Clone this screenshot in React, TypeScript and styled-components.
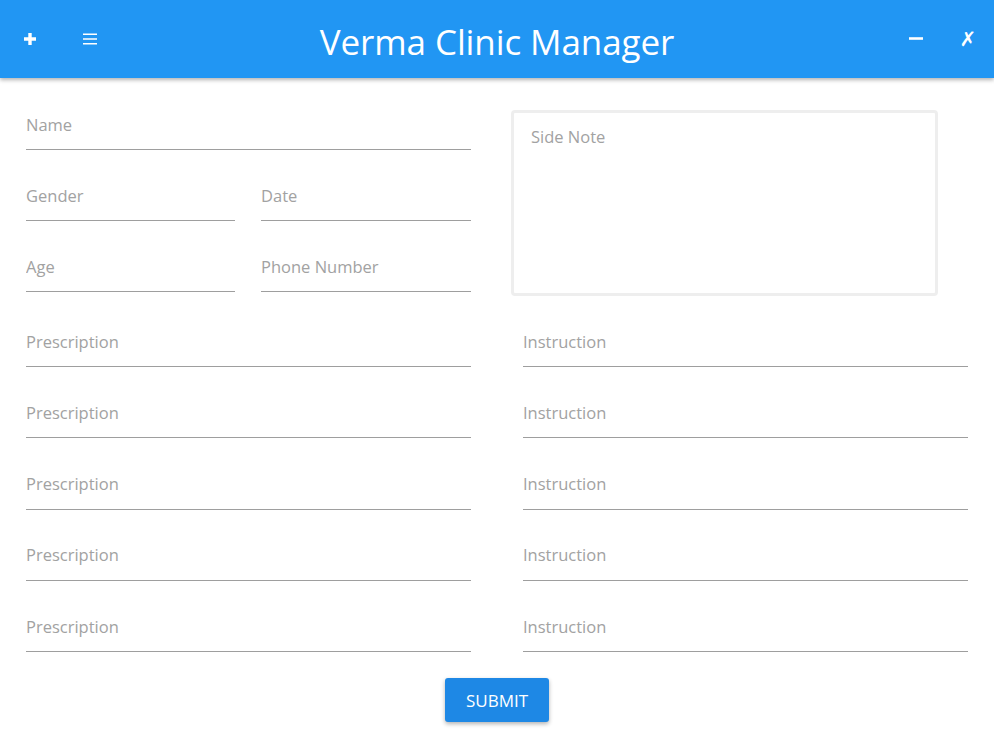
import React from 'react';
import styled, { createGlobalStyle } from 'styled-components';

const GlobalStyle = createGlobalStyle`
  * {
    box-sizing: border-box;
  }
  body {
    margin: 0;
    background: #ffffff;
    font-family: 'Open Sans', 'Noto Sans', sans-serif;
  }
`;

const Page = styled.div`
  width: 994px;
  height: 743px;
  display: flex;
  flex-direction: column;
  overflow: hidden;
`;

const Header = styled.header`
  height: 78px;
  flex-shrink: 0;
  display: flex;
  align-items: center;
  background: #2196f3;
  box-shadow: 0 2px 4px rgba(0, 0, 0, 0.3);
  color: #ffffff;
  position: relative;
  z-index: 1;
`;

const IconGroup = styled.div`
  display: flex;
  align-items: center;
  gap: ${p => p.$gap}px;
  padding: 0 ${p => p.$pad}px;
  width: 140px;
  justify-content: ${p => (p.$end ? 'flex-end' : 'flex-start')};
`;

const IconButton = styled.button`
  width: 24px;
  height: 24px;
  padding: 0;
  border: none;
  background: transparent;
  color: #ffffff;
  display: flex;
  align-items: center;
  justify-content: center;
  cursor: pointer;
  font-family: 'DejaVu Sans', sans-serif;
  font-size: 20px;
  font-weight: 700;
`;

const Title = styled.h1`
  flex: 1;
  margin: 4px 0 0;
  text-align: center;
  font-size: 35px;
  font-weight: 400;
  letter-spacing: -0.1px;
`;

const Main = styled.main`
  padding: 25px 26px 0;
  display: flex;
  flex-direction: column;
  gap: 24px;
`;

const TopSection = styled.section`
  display: grid;
  grid-template-columns: 445px 427px;
  column-gap: 40px;
  align-items: start;
`;

const FieldStack = styled.div`
  display: flex;
  flex-direction: column;
  gap: 24px;
`;

const FieldPair = styled.div`
  display: grid;
  grid-template-columns: 209px 210px;
  column-gap: 26px;
`;

const Input = styled.input`
  display: block;
  width: 100%;
  height: 47px;
  padding: 9px 0 13px;
  border: none;
  border-bottom: 1px solid #9e9e9e;
  outline: none;
  background: transparent;
  font-family: inherit;
  font-size: 16.5px;
  line-height: 24px;
  color: #333333;

  &::placeholder {
    color: #a2a2a2;
  }
`;

const NoteBox = styled.textarea`
  display: block;
  margin-top: 7px;
  width: 427px;
  height: 186px;
  padding: 12px 17px;
  border: 3px solid #eeeeee;
  border-radius: 4px;
  resize: none;
  outline: none;
  font-family: inherit;
  font-size: 16.5px;
  line-height: 24px;

  &::placeholder {
    color: #a2a2a2;
  }
`;

const RowsSection = styled.section`
  display: grid;
  grid-template-columns: 445px 445px;
  column-gap: 52px;
  row-gap: 24.25px;
`;

const Actions = styled.div`
  display: flex;
  justify-content: center;
  padding-top: 2px;
`;

const SubmitButton = styled.button`
  width: 104px;
  height: 44px;
  border: none;
  border-radius: 3px;
  background: #1e88e5;
  color: #ffffff;
  font-family: inherit;
  font-size: 17px;
  text-transform: uppercase;
  box-shadow: 0 2px 4px rgba(0, 0, 0, 0.3);
  cursor: pointer;
`;

const PlusIcon = () => (
  <svg width="14" height="14" viewBox="0 0 14 14">
    <path d="M7 1v12M1 7h12" stroke="currentColor" strokeWidth="3.4" />
  </svg>
);

const MenuIcon = () => (
  <svg width="14" height="14" viewBox="0 0 14 14">
    <path d="M0 2.2h14M0 7h14M0 11.8h14" stroke="currentColor" strokeWidth="1.6" />
  </svg>
);

const MinusIcon = () => (
  <svg width="14" height="14" viewBox="0 0 14 14">
    <path d="M0 6.5h14" stroke="currentColor" strokeWidth="2.6" />
  </svg>
);

const rows = [0, 1, 2, 3, 4];

export default function App() {
  return (
    <Page>
      <GlobalStyle />
      <Header>
        <IconGroup $pad={18} $gap={36}>
          <IconButton aria-label="Add">
            <PlusIcon />
          </IconButton>
          <IconButton aria-label="Menu">
            <MenuIcon />
          </IconButton>
        </IconGroup>
        <Title>Verma Clinic Manager</Title>
        <IconGroup $pad={14} $gap={28} $end>
          <IconButton aria-label="Minimize">
            <MinusIcon />
          </IconButton>
          <IconButton aria-label="Close">✗</IconButton>
        </IconGroup>
      </Header>
      <Main>
        <TopSection>
          <FieldStack>
            <Input placeholder="Name" />
            <FieldPair>
              <Input placeholder="Gender" />
              <Input placeholder="Date" />
            </FieldPair>
            <FieldPair>
              <Input placeholder="Age" />
              <Input placeholder="Phone Number" />
            </FieldPair>
          </FieldStack>
          <NoteBox placeholder="Side Note" />
        </TopSection>
        <RowsSection>
          {rows.map(i => (
            <React.Fragment key={i}>
              <Input placeholder="Prescription" />
              <Input placeholder="Instruction" />
            </React.Fragment>
          ))}
        </RowsSection>
        <Actions>
          <SubmitButton>Submit</SubmitButton>
        </Actions>
      </Main>
    </Page>
  );
}
